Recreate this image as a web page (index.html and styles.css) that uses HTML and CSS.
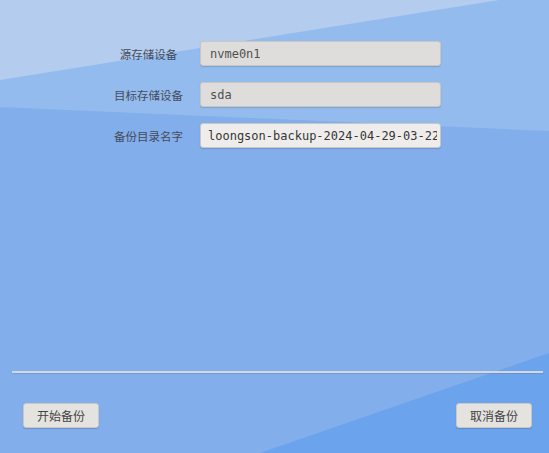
FILE: index.html
```html
<!DOCTYPE html>
<html lang="zh-CN">
<head>
<meta charset="utf-8">
<title>备份</title>
<link rel="stylesheet" href="styles.css">
</head>
<body>
<div class="screen">
  <div class="form">
    <label class="label">源存储设备</label>
    <input class="field field-disabled" type="text" value="nvme0n1" readonly>
    <label class="label">目标存储设备</label>
    <input class="field field-disabled" type="text" value="sda" readonly>
    <label class="label">备份目录名字</label>
    <input class="field field-edit" type="text" value="loongson-backup-2024-04-29-03-22">
  </div>
  <div class="divider"></div>
  <div class="footer">
    <button class="btn" type="button">开始备份</button>
    <button class="btn" type="button">取消备份</button>
  </div>
</div>
</body>
</html>
```
FILE: styles.css
```css
html, body {
  margin: 0;
  padding: 0;
}
body {
  width: 549px;
  height: 453px;
  overflow: hidden;
  font-family: "Noto Sans CJK SC", "Noto Sans", sans-serif;
}
.screen {
  width: 549px;
  height: 453px;
  display: flex;
  flex-direction: column;
  background-color: #82aeec;
  background-image: url("data:image/svg+xml,%3Csvg xmlns='http://www.w3.org/2000/svg' width='549' height='453'%3E%3Crect width='549' height='453' fill='%2382aeec'/%3E%3Cpolygon points='0,0 549,0 549,131 0,107' fill='%2394bbee'/%3E%3Cpolygon points='0,0 499,0 0,80' fill='%23b4cdef'/%3E%3Cpolygon points='260,453 549,353 549,453' fill='%236ba4ec'/%3E%3C/svg%3E");
  background-repeat: no-repeat;
}
.form {
  display: grid;
  grid-template-columns: 69px 241px;
  column-gap: 17px;
  row-gap: 16px;
  align-items: center;
  margin: 41px 0 0 114px;
}
.label {
  text-align: center;
  font-size: 11.5px;
  line-height: 16px;
  color: #444b5a;
  white-space: nowrap;
}
.field {
  box-sizing: border-box;
  height: 25px;
  width: 241px;
  margin: 0;
  border: 1px solid #c9c7c4;
  border-radius: 3px;
  font-family: "DejaVu Sans Mono", monospace;
  font-size: 12px;
  color: #505050;
  outline: none;
  box-shadow: 0 1px 1px rgba(60, 80, 120, 0.25);
}
.field-disabled {
  background: #dfdddb;
  padding: 0 8px 0 9px;
}
.field-edit {
  background: #eeedeb;
  color: #363636;
  padding: 0 3px 0 7px;
}
.divider {
  height: 2px;
  margin: 223px 6px 0 12px;
  background: #d6d7dc;
  box-shadow: 0 1px 1px rgba(90, 110, 150, 0.3);
}
.footer {
  display: flex;
  justify-content: space-between;
  padding: 0 17px 0 23px;
  margin-top: 30px;
}
.btn {
  box-sizing: border-box;
  width: 76px;
  height: 25px;
  margin: 0;
  padding: 0;
  border: 1px solid #cac8c5;
  border-radius: 3px;
  background: #e5e3e0;
  font-family: "Noto Sans CJK SC", "Noto Sans", sans-serif;
  font-size: 12px;
  color: #444444;
  box-shadow: 0 1px 1px rgba(60, 80, 120, 0.3);
}
```
